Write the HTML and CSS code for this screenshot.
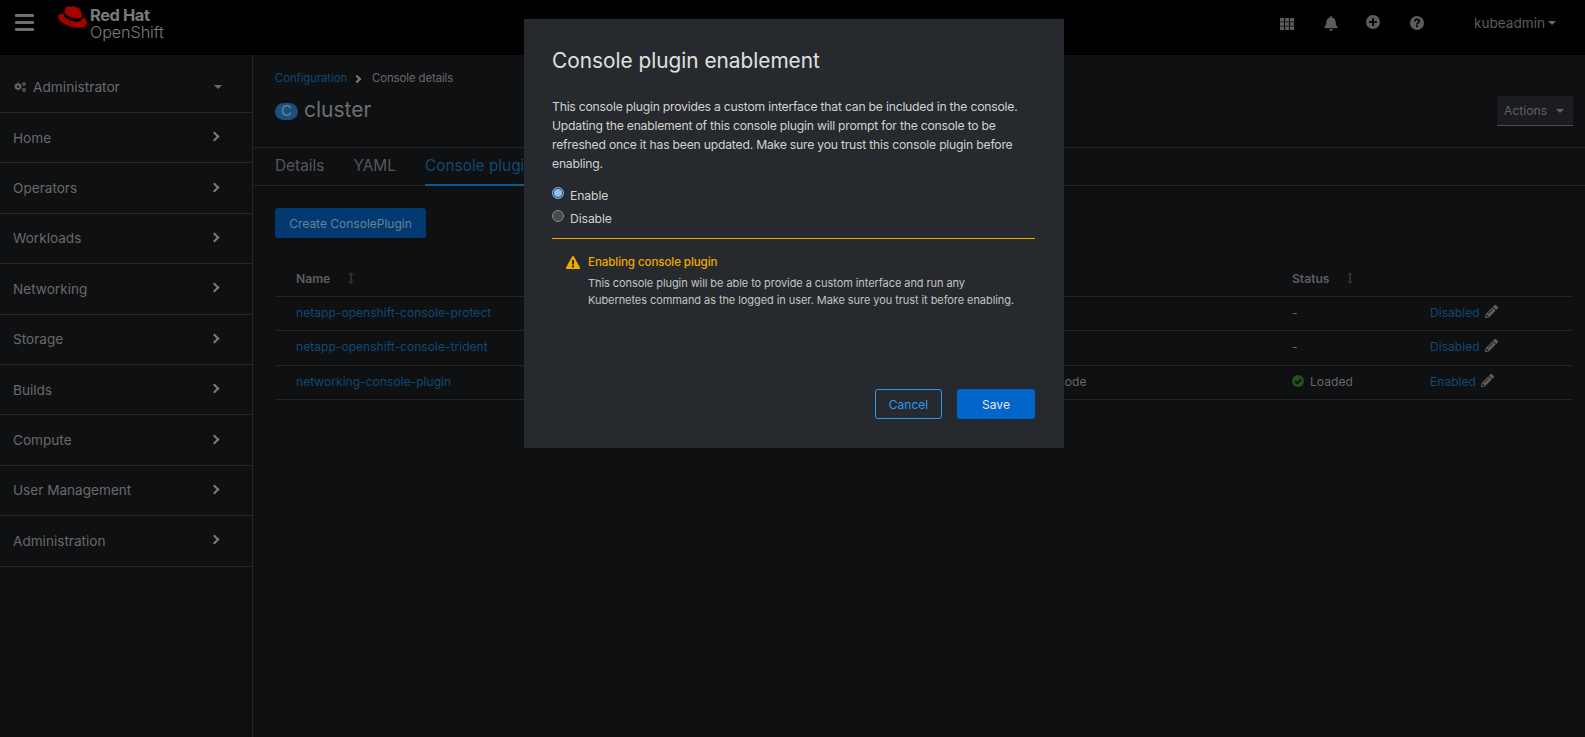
FILE: index.html
```html
<!DOCTYPE html>
<html lang="en">
<head>
<meta charset="utf-8">
<title>Console details</title>
<link rel="stylesheet" href="styles.css">
</head>
<body>
<header class="masthead">
  <div class="burger"><span></span><span></span><span></span></div>
  <svg class="hat" viewBox="0 2.3 24 18.8"><path fill="#a30000" d="M16.009 13.386c1.577 0 3.860-.326 3.860-2.202a1.765 1.765 0 0 0-.04-.431l-.94-4.080c-.216-.898-.406-1.305-1.982-2.093-1.223-.625-3.888-1.658-4.676-1.658-.733 0-.947.946-1.822.946-.842 0-1.467-.706-2.255-.706-.757 0-1.250.515-1.630 1.576 0 0-1.060 2.990-1.197 3.424a.81.81 0 0 0-.028.245c0 1.162 4.577 4.974 10.710 4.974m4.101-1.435c.218 1.032.218 1.140.218 1.277 0 1.765-1.984 2.745-4.593 2.745-5.895.004-11.060-3.451-11.060-5.734a2.326 2.326 0 0 1 .19-.925C2.746 9.415 0 9.794 0 12.217c0 3.969 9.405 8.861 16.851 8.861 5.710 0 7.149-2.582 7.149-4.620 0-1.605-1.387-3.425-3.887-4.512"/></svg>
  <div class="brand"><b>Red Hat</b><span>OpenShift</span></div>
  <div class="tools">
    <svg class="ti grid" viewBox="0 0 14 12"><path d="M0 0h4v3.400H0zM5 0h4v3.400H5zM10 0h4v3.400h-4zM0 4.300h4v3.400H0zM5 4.300h4v3.400H5zM10 4.300h4v3.400h-4zM0 8.600h4V12H0zM5 8.600h4V12H5zM10 8.600h4V12h-4z"/></svg>
    <svg class="ti bell" viewBox="0 0 448 512"><path d="M224 512c35.320 0 63.970-28.650 63.970-64H160.030c0 35.350 28.650 64 63.970 64zm215.390-149.710c-19.320-20.760-55.470-51.990-55.470-154.290 0-77.700-54.480-139.900-127.940-155.160V32c0-17.670-14.320-32-31.980-32s-31.980 14.330-31.980 32v20.840C118.560 68.100 64.080 130.300 64.080 208c0 102.300-36.150 133.530-55.470 154.290-6 6.450-8.660 14.160-8.610 21.710.11 16.400 12.980 32 32.100 32h383.800c19.120 0 32-15.600 32.100-32 .05-7.550-2.610-15.270-8.610-21.710z"/></svg>
    <svg class="ti plus" viewBox="0 0 14 14"><path fill-rule="evenodd" d="M7 0a7 7 0 1 1 0 14A7 7 0 0 1 7 0zM6 3.200v2.800H3.200v2H6v2.800h2V8h2.800V6H8V3.200z"/></svg>
    <svg class="ti help" viewBox="0 0 14 14"><circle cx="7" cy="7" r="7"/><path d="M4.800 5.400C4.900 4.100 5.800 3.400 7 3.400c1.300 0 2.200.8 2.200 1.900 0 1.700-2.200 1.600-2.200 3.100" fill="none" stroke="#000" stroke-width="1.700"/><rect x="6" y="9.300" width="2" height="1.800" fill="#000"/></svg>
    <span class="user">kubeadmin</span><i class="caret user-caret"></i>
  </div>
</header>
<div class="shell">
  <nav class="sidebar">
    <div class="perspective">
      <svg class="cogs" viewBox="0 0 12 10"><path fill-rule="evenodd" d="M4 1.300a3.300 3.300 0 1 1 0 6.600 3.300 3.300 0 0 1 0-6.600zm0 2a1.300 1.300 0 1 0 0 2.600 1.300 1.300 0 0 0 0-2.600zM3.300.6h1.400v1.200H3.300zM3.300 7.400h1.400v1.200H3.300zM.1 3.900h1.200v1.400H.1zM6.700 3.900h1.200v1.400H6.700z"/><circle cx="10" cy="2" r="1.300" fill="none" stroke="currentColor" stroke-width="1.100"/><circle cx="10" cy="7.800" r="1.300" fill="none" stroke="currentColor" stroke-width="1.100"/></svg>
      <span class="perspective-label">Administrator</span><i class="caret"></i>
    </div>
    <a class="nav-item">Home<i class="chev"></i></a>
    <a class="nav-item">Operators<i class="chev"></i></a>
    <a class="nav-item">Workloads<i class="chev"></i></a>
    <a class="nav-item">Networking<i class="chev"></i></a>
    <a class="nav-item">Storage<i class="chev"></i></a>
    <a class="nav-item">Builds<i class="chev"></i></a>
    <a class="nav-item">Compute<i class="chev"></i></a>
    <a class="nav-item">User Management<i class="chev"></i></a>
    <a class="nav-item">Administration<i class="chev"></i></a>
  </nav>
  <main class="content">
    <div class="page-head">
      <div class="crumbs"><a class="link">Configuration</a><i class="chev small"></i><span>Console details</span></div>
      <div class="title-row">
        <h1 class="title"><span class="badge">C</span>cluster</h1>
        <div class="actions">Actions<i class="caret"></i></div>
      </div>
    </div>
    <div class="tabs">
      <a class="tab">Details</a>
      <a class="tab">YAML</a>
      <a class="tab active">Console plugins</a>
    </div>
    <div class="panel">
      <button class="create">Create ConsolePlugin</button>
      <div class="table">
        <div class="row head">
          <div class="c-name">Name<svg class="sort" viewBox="0 0 6 12"><path d="M3 0l3 3H4v6h2l-3 3-3-3h2V3H0z"/></svg></div>
          <div class="c-desc"></div>
          <div class="c-status">Status<svg class="sort" viewBox="0 0 6 12"><path d="M3 0l3 3H4v6h2l-3 3-3-3h2V3H0z"/></svg></div>
          <div class="c-act"></div>
        </div>
        <div class="row">
          <div class="c-name link">netapp-openshift-console-protect</div>
          <div class="c-desc"></div>
          <div class="c-status">-</div>
          <div class="c-act"><span class="link">Disabled</span><svg class="pencil" viewBox="0 0 512 512"><path d="M497.900 142.100l-46.100 46.100c-4.700 4.700-12.300 4.700-17 0l-111-111c-4.700-4.700-4.700-12.300 0-17l46.100-46.100c18.700-18.700 49.100-18.700 67.900 0l60.100 60.100c18.800 18.700 18.800 49.100 0 67.900zM284.200 99.800L21.600 362.400.4 483.900c-2.900 16.400 11.400 30.600 27.800 27.800l121.500-21.300 262.600-262.600c4.700-4.700 4.700-12.300 0-17l-111-111c-4.800-4.700-12.400-4.700-17.100 0zM124.100 339.900c-5.500-5.500-5.500-14.300 0-19.800l154-154c5.500-5.500 14.300-5.500 19.800 0s5.500 14.300 0 19.800l-154 154c-5.500 5.500-14.300 5.500-19.800 0zM88 424h48v36.300l-64.500 11.300-31.100-31.100L51.700 376H88v48z"/></svg></div>
        </div>
        <div class="row">
          <div class="c-name link">netapp-openshift-console-trident</div>
          <div class="c-desc"></div>
          <div class="c-status">-</div>
          <div class="c-act"><span class="link">Disabled</span><svg class="pencil" viewBox="0 0 512 512"><path d="M497.900 142.100l-46.100 46.100c-4.700 4.700-12.300 4.700-17 0l-111-111c-4.700-4.700-4.700-12.300 0-17l46.100-46.100c18.700-18.700 49.100-18.700 67.900 0l60.100 60.100c18.800 18.700 18.800 49.100 0 67.900zM284.200 99.800L21.600 362.400.4 483.900c-2.900 16.400 11.400 30.600 27.800 27.800l121.500-21.300 262.600-262.600c4.700-4.700 4.700-12.300 0-17l-111-111c-4.800-4.700-12.400-4.700-17.100 0zM124.100 339.900c-5.500-5.500-5.500-14.300 0-19.800l154-154c5.500-5.500 14.300-5.500 19.800 0s5.500 14.300 0 19.800l-154 154c-5.500 5.500-14.300 5.500-19.800 0zM88 424h48v36.300l-64.500 11.300-31.100-31.100L51.700 376H88v48z"/></svg></div>
        </div>
        <div class="row">
          <div class="c-name link">networking-console-plugin</div>
          <div class="c-desc">Source code</div>
          <div class="c-status"><svg class="check" viewBox="0 0 12 12"><circle cx="6" cy="6" r="6" fill="#23511f"/><path d="M3 6.200l2.200 2.200L9.200 4.300" fill="none" stroke="#0e1012" stroke-width="1.800"/></svg>Loaded</div>
          <div class="c-act"><span class="link">Enabled</span><svg class="pencil" viewBox="0 0 512 512"><path d="M497.900 142.100l-46.100 46.100c-4.700 4.700-12.300 4.700-17 0l-111-111c-4.700-4.700-4.700-12.300 0-17l46.100-46.100c18.700-18.700 49.100-18.700 67.900 0l60.100 60.100c18.800 18.700 18.800 49.100 0 67.900zM284.200 99.800L21.600 362.400.4 483.900c-2.900 16.400 11.400 30.600 27.800 27.800l121.500-21.300 262.600-262.600c4.700-4.700 4.700-12.300 0-17l-111-111c-4.800-4.700-12.400-4.700-17.100 0zM124.100 339.900c-5.500-5.500-5.500-14.300 0-19.800l154-154c5.500-5.500 14.300-5.500 19.800 0s5.500 14.300 0 19.800l-154 154c-5.500 5.500-14.300 5.500-19.800 0zM88 424h48v36.300l-64.500 11.300-31.100-31.100L51.700 376H88v48z"/></svg></div>
        </div>
      </div>
    </div>
  </main>
</div>
<section class="modal">
  <h2 class="modal-title">Console plugin enablement</h2>
  <p class="modal-text">This console plugin provides a custom interface that can be included in the console. Updating the enablement of this console plugin will prompt for the console to be refreshed once it has been updated. Make sure you trust this console plugin before enabling.</p>
  <div class="radios">
    <label class="radio"><i class="dot on"></i>Enable</label>
    <label class="radio"><i class="dot"></i>Disable</label>
  </div>
  <div class="alert">
    <svg class="warn" viewBox="0 0 14 13"><path fill="#f0ab00" fill-rule="evenodd" d="M7 0c.4 0 .7.2.9.5l6 11c.3.7-.1 1.500-.9 1.500H1c-.8 0-1.200-.8-.9-1.500l6-11C6.300.2 6.600 0 7 0zM6 4v4.500h2V4zm0 5.500v2h2v-2z"/></svg>
    <div>
      <div class="alert-title">Enabling console plugin</div>
      <div class="alert-body">This console plugin will be able to provide a custom interface and run any Kubernetes command as the logged in user. Make sure you trust it before enabling.</div>
    </div>
  </div>
  <div class="modal-foot">
    <button class="btn cancel">Cancel</button>
    <button class="btn save">Save</button>
  </div>
</section>
</body>
</html>
```
FILE: styles.css
```css
* { box-sizing: border-box; }
html, body { margin: 0; height: 100%; overflow: hidden; }
body {
  background: #0e1012;
  color: #686a6c;
  font-family: Inter, "Noto Sans", sans-serif;
  font-size: 13px;
  display: flex;
  flex-direction: column;
}
button { font: inherit; border: 0; }
svg { display: block; flex: none; }
h1, h2, p { margin: 0; font-weight: 400; }

.masthead {
  height: 55px;
  background: #000;
  display: flex;
  align-items: flex-start;
  flex: none;
}
.burger { width: 19px; margin: 14px 0 0 15px; display: flex; flex-direction: column; gap: 4px; }
.burger span { height: 3px; background: #6f6f6f; border-radius: 1px; }
.hat { width: 29px; height: 23px; margin: 5px 0 0 24px; }
.brand { margin: 7px 0 0 3px; display: flex; flex-direction: column; color: #7c7c7c; font-size: 16px; line-height: 17px; }
.brand b { font-weight: 700; font-size: 16.4px; color: #7a7a7a; letter-spacing: -.4px; }
.brand span { font-size: 16.2px; font-weight: 300; letter-spacing: -.1px; }
.tools { margin-left: auto; height: 46px; display: flex; align-items: center; padding-right: 29px; }
.ti { fill: #5c5c5c; }
.grid { width: 14px; height: 12px; margin-top: 1px; }
.bell { width: 14px; height: 15px; margin-left: 30px; }
.plus { width: 14px; height: 14px; margin: -3px 0 0 28px; }
.help { width: 14px; height: 14px; margin-left: 30px; }
.user { margin-left: 50px; font-size: 13.6px; color: #5c5c5c; }
.user-caret { margin-left: 3px; }

.caret { display: block; width: 0; height: 0; border: 4px solid transparent; border-top: 4px solid currentColor; border-bottom: 0; flex: none; }
.chev { display: block; width: 7px; height: 7px; margin-bottom: 2px; border: solid #7a7a7a; border-width: 2px 2px 0 0; transform: rotate(45deg); flex: none; }
.chev.small { width: 6px; height: 6px; margin: 0 12px 0 7px; }

.shell { flex: 1; display: flex; min-height: 0; }
.sidebar { width: 253px; flex: none; border-right: 1px solid #222427; display: flex; flex-direction: column; }
.perspective { height: 58px; flex: none; border-bottom: 1px solid #26282b; display: flex; align-items: center; padding: 6px 30px 0 14px; font-size: 13.7px; }
.cogs { width: 12px; height: 10px; fill: currentColor; margin-right: 7px; }
.perspective-label { flex: 1; }
.nav-item {
  height: 50.4px;
  flex: none;
  border-bottom: 1px solid #26282b;
  display: flex;
  align-items: center;
  justify-content: space-between;
  padding: 0 34px 0 13px;
  font-size: 13.6px;
}

.content { flex: 1; min-width: 0; }
.page-head { height: 92px; padding: 16px 12px 0 22px; }
.crumbs { display: flex; align-items: center; font-size: 11.4px; letter-spacing: -.1px; line-height: 15px; }
.link { color: #104a72; }
.title-row { display: flex; justify-content: space-between; align-items: center; margin-top: 3px; }
.title { display: flex; align-items: center; gap: 6px; font-size: 21px; line-height: 28px; margin-top: 5px; color: #6d6f71; }
.badge { width: 23px; height: 17px; margin-top: 2px; border-radius: 9px; background: #1b4f7d; color: #6d8193; font-size: 15px; display: flex; align-items: center; justify-content: center; }
.actions { width: 76px; height: 30px; margin-top: 7px; background: #1a1c1f; border-bottom: 1px solid #4c4c4c; display: flex; align-items: center; justify-content: space-between; padding: 0 9px 0 7px; font-size: 12.2px; color: #5f6163; }
.tabs { height: 39px; border-top: 1px solid #222427; border-bottom: 1px solid #222427; display: flex; padding-left: 22px; gap: 29px; }
.tab { font-size: 15.4px; line-height: 35px; color: #55575a; height: 38px; white-space: nowrap; }
.tab.active { color: #104a72; border-bottom: 2px solid #0f5a8e; }
.panel { padding: 22px 12px 0 22px; }
.create { display: block; width: 151px; height: 30px; background: #003a70; color: #6f8194; border-radius: 3px; font-size: 12px; padding: 0; }
.table { margin-top: 24.5px; }
.row { display: grid; grid-template-columns: 720px 297px 138px 1fr; height: 34.4px; padding-bottom: 2px; border-bottom: 1px solid #222427; align-items: center; font-size: 12.1px; }
.row.head { font-weight: 600; color: #5d5f61; }
.row > div { display: flex; align-items: center; }
.c-name { padding-left: 21px; }
.c-desc { padding-left: 19px; }
.sort { width: 6px; height: 12px; margin-left: 18px; fill: #2c2e30; }
.pencil { width: 13px; height: 13px; margin: -2px 0 0 5px; fill: #5f5f5f; }
.check { width: 12px; height: 12px; margin-right: 6px; }

.modal {
  position: absolute;
  left: 524px;
  top: 19px;
  width: 540px;
  height: 429px;
  background: #26292d;
  padding: 29px 29px 29px 28px;
  display: flex;
  flex-direction: column;
  color: #d2d2d2;
}
.modal-title { font-size: 20.8px; line-height: 26px; color: #e0e0e0; }
.modal-text { margin-top: 23px; font-size: 12.2px; letter-spacing: -.22px; line-height: 19px; }
.radios { margin-top: 12px; display: flex; flex-direction: column; gap: 5px; font-size: 12.2px; letter-spacing: -.1px; }
.radio { display: flex; height: 18px; align-items: flex-end; line-height: 15px; }
.dot { width: 12px; height: 12px; margin: 2px 6px 4px 0; border-radius: 50%; background: #4a4a4a; border: 1px solid #8a8a8a; flex: none; align-self: flex-start; }
.dot.on { background: #8fc1f5; border: 1px solid #7ab0e8; box-shadow: inset 0 0 0 1px #26292d; }
.alert { margin-top: 12px; border-top: 1px solid #f0ab00; padding: 16px 14px 0; display: flex; gap: 8px; flex: 1; }
.warn { width: 14px; height: 13px; margin-top: 1px; }
.alert-title { color: #f0ab00; font-size: 11.6px; letter-spacing: -.1px; font-weight: 500; line-height: 15px; }
.alert-body { margin-top: 5px; font-size: 11px; letter-spacing: -.07px; line-height: 17px; color: #c4c4c4; }
.modal-foot { display: flex; justify-content: flex-end; gap: 15px; }
.btn { height: 30px; border-radius: 3px; font-size: 12px; padding: 0; }
.cancel { width: 67px; background: transparent; border: 1px solid #2b9af3; color: #2b9af3; }
.save { width: 78px; background: #06c; color: #e6e6e6; }
```
